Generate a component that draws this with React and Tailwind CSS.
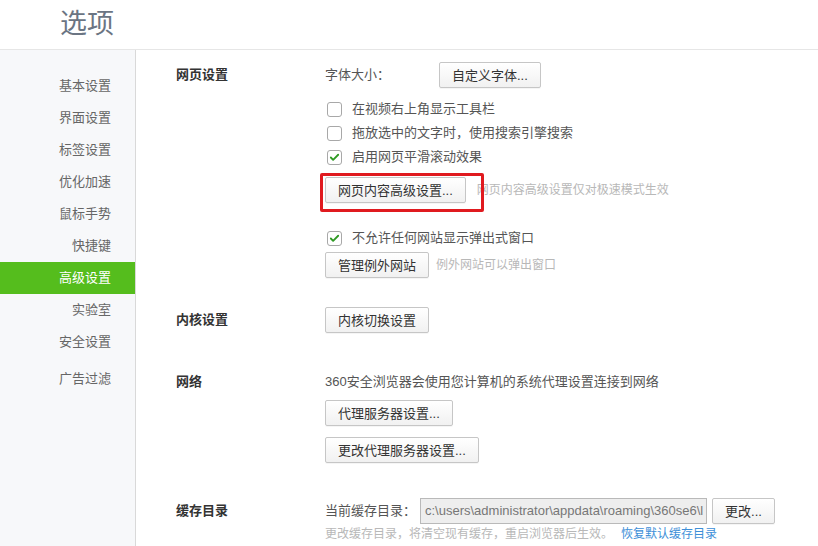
import { Check } from 'lucide-react'

const FONT = { fontFamily: '"Liberation Sans", "Noto Sans CJK SC", sans-serif' }

const NAV = ['基本设置', '界面设置', '标签设置', '优化加速', '鼠标手势', '快捷键', '高级设置', '实验室', '安全设置']

function Btn({ children, className = '' }) {
  return (
    <button className={`h-[26px] px-[12px] border border-[#c6c6c6] rounded-[2px] bg-gradient-to-b from-white to-[#f1f1f1] text-[13px] text-[#333] leading-none whitespace-nowrap shadow-[0_1px_0_rgba(0,0,0,0.04)] ${className}`}>
      {children}
    </button>
  )
}

function CheckRow({ checked, children }) {
  return (
    <div className="flex items-center h-6 pl-[2px]">
      <span className="w-[15px] h-[15px] border border-[#a8a8a8] rounded-[3px] bg-white flex items-center justify-center">
        {checked && <Check className="w-[11px] h-[11px] text-[#2f9a23]" strokeWidth={4} />}
      </span>
      <span className="ml-[10px] text-[13px] text-[#555]">{children}</span>
    </div>
  )
}

function Section({ label, children, className = '', labelClass = 'leading-[26px]' }) {
  return (
    <div className={`flex ${className}`}>
      <div className={`w-[149px] shrink-0 text-[13px] font-bold text-[#333] ${labelClass}`}>{label}</div>
      <div className="flex-1">{children}</div>
    </div>
  )
}

export default function App() {
  return (
    <div style={FONT} className="w-[818px] h-[546px] bg-white overflow-hidden">
      <header className="h-[50px] border-b border-[#e6e6e6] flex items-center pl-[60px]">
        <h1 className="text-[27px] text-[#6b7583] leading-none">选项</h1>
      </header>

      <div className="flex h-[496px]">
        <aside className="w-[136px] shrink-0 bg-[#f7f8fa] border-r border-[#d9d9d9] pt-5">
          {NAV.map(item => (
            <div
              key={item}
              className={`h-8 flex items-center justify-end pr-[24px] text-[13px] ${item === '高级设置' ? 'bg-[#55bd1d] text-white' : 'text-[#666]'}`}
            >
              {item}
            </div>
          ))}
          <div className="h-8 mt-[5px] flex items-center justify-end pr-[24px] text-[13px] text-[#666]">广告过滤</div>
        </aside>

        <main className="flex-1 pl-[40px] pt-[12px]">
          <Section label="网页设置">
            <div className="flex items-center h-[26px]">
              <span className="w-[114px] text-[13px] text-[#555]">字体大小：</span>
              <Btn>自定义字体...</Btn>
            </div>
            <div className="mt-[9px]">
              <CheckRow>在视频右上角显示工具栏</CheckRow>
              <CheckRow>拖放选中的文字时，使用搜索引擎搜索</CheckRow>
              <CheckRow checked>启用网页平滑滚动效果</CheckRow>
            </div>
            <div className="flex items-center mt-[8px]">
              <div className="relative">
                <Btn>网页内容高级设置...</Btn>
                <div className="absolute left-[-5px] top-[-4px] w-[164px] h-[39px] border-[3px] border-[#e01a1f] rounded-[2px] pointer-events-none" />
              </div>
              <span className="ml-[11px] text-[12px] text-[#b8b8b8]">网页内容高级设置仅对极速模式生效</span>
            </div>
            <div className="mt-[23px]">
              <CheckRow checked>不允许任何网站显示弹出式窗口</CheckRow>
            </div>
            <div className="flex items-center mt-[2px]">
              <Btn>管理例外网站</Btn>
              <span className="ml-[7px] text-[12px] text-[#b8b8b8]">例外网站可以弹出窗口</span>
            </div>
          </Section>

          <Section label="内核设置" className="mt-[29px]">
            <Btn>内核切换设置</Btn>
          </Section>

          <Section label="网络" className="mt-[39px]" labelClass="leading-[20px]">
            <div className="text-[13px] text-[#555] leading-[20px]">360安全浏览器会使用您计算机的系统代理设置连接到网络</div>
            <div className="mt-[8px] flex flex-col items-start gap-[11px]">
              <Btn>代理服务器设置...</Btn>
              <Btn>更改代理服务器设置...</Btn>
            </div>
          </Section>

          <Section label="缓存目录" className="mt-[35px]">
            <div className="flex items-center h-[26px]">
              <span className="w-[95px] text-[13px] text-[#555]">当前缓存目录：</span>
              <div className="w-[287px] h-[26px] border border-[#b9b9b9] bg-[#eeeeee] text-[13px] text-[#777] px-[4px] leading-[24px] overflow-hidden whitespace-nowrap text-clip">
                c:\users\administrator\appdata\roaming\360se6\l
              </div>
              <Btn className="ml-[5px] w-[63px] px-0">更改...</Btn>
            </div>
            <div className="mt-[2px] text-[12px] leading-[16px] whitespace-nowrap">
              <span className="text-[#b8b8b8]">更改缓存目录，将清空现有缓存，重启浏览器后生效。</span>
              <span className="ml-[8px] text-[#3d8fd8]">恢复默认缓存目录</span>
            </div>
          </Section>
        </main>
      </div>
    </div>
  )
}
